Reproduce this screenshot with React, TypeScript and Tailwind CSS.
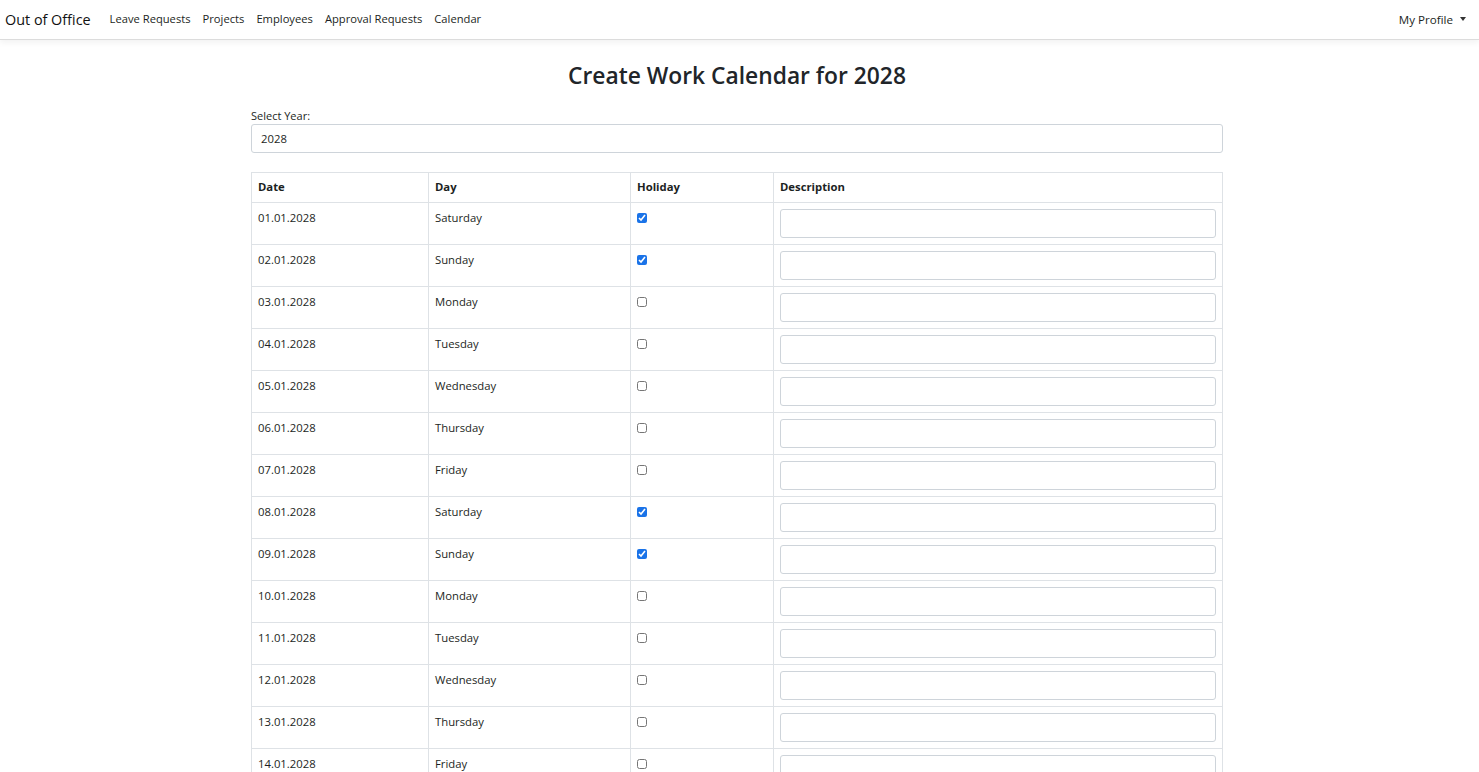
import React, { useState } from 'react';

const DAYS = ['Sunday', 'Monday', 'Tuesday', 'Wednesday', 'Thursday', 'Friday', 'Saturday'];

const pad = (n: number) => (n < 10 ? '0' + n : '' + n);

const buildRows = (year: number) => {
  const rows = [];
  for (let d = 1; d <= 31; d++) {
    const date = new Date(year, 0, d);
    const dow = date.getDay();
    rows.push({
      date: `${pad(d)}.01.${year}`,
      day: DAYS[dow],
      holiday: dow === 0 || dow === 6,
    });
  }
  return rows;
};

const NavBar: React.FC = () => (
  <nav className="h-[40px] bg-white border-b border-[#dcdcdc] shadow-[0_3px_6px_rgba(0,0,0,0.05)] flex items-center justify-between pl-[5px] pr-[13px]">
    <div className="flex items-center">
      <span className="text-[14.4px] text-[#111] mr-[19px]">Out of Office</span>
      <div className="flex items-center gap-[12px] text-[11.2px] text-[#1c1f23]">
        <a>Leave Requests</a>
        <a>Projects</a>
        <a>Employees</a>
        <a>Approval Requests</a>
        <a>Calendar</a>
      </div>
    </div>
    <div className="flex items-center text-[11.6px] text-[#1c1f23]">
      My Profile
      <span className="ml-[7px] w-0 h-0 border-l-[3.5px] border-r-[3.5px] border-t-[4px] border-l-transparent border-r-transparent border-t-[#333]" />
    </div>
  </nav>
);

export default function App() {
  const [year, setYear] = useState('2028');
  const [rows, setRows] = useState(() => buildRows(2028));

  const toggle = (i: number) => {
    setRows(rows.map((r, idx) => (idx === i ? { ...r, holiday: !r.holiday } : r)));
  };

  return (
    <div className="min-h-screen bg-white text-[#1c1f23] font-['Open_Sans',sans-serif]">
      <NavBar />
      <div className="pr-[5px]">
        <div className="w-[972px] mx-auto">
          <h3 className="text-center text-[22.8px] font-semibold leading-[1.2] mt-[22px] mb-[19px] text-[#212529]">
            Create Work Calendar for 2028
          </h3>
          <label className="block text-[11px] leading-[16px]">Select Year:</label>
          <input
            value={year}
            onChange={(e) => setYear(e.target.value)}
            className="w-full h-[29px] px-[9px] text-[11.3px] border border-[#ced4da] rounded-[3px] outline-none"
          />
          <table className="w-full mt-[19px] border-collapse text-[11.3px]">
            <thead>
              <tr className="h-[30px]">
                <th className="w-[177px] text-left font-bold px-[6px] border border-[#dee2e6]">Date</th>
                <th className="w-[202px] text-left font-bold px-[6px] border border-[#dee2e6]">Day</th>
                <th className="w-[143px] text-left font-bold px-[6px] border border-[#dee2e6]">Holiday</th>
                <th className="text-left font-bold px-[6px] border border-[#dee2e6]">Description</th>
              </tr>
            </thead>
            <tbody>
              {rows.map((r, i) => (
                <tr key={r.date}>
                  <td className="align-top px-[6px] pt-[6px] pb-[6px] leading-[18px] border border-[#dee2e6]">{r.date}</td>
                  <td className="align-top px-[6px] pt-[6px] pb-[6px] leading-[18px] border border-[#dee2e6]">{r.day}</td>
                  <td className="align-top px-[6px] pt-[6px] pb-[6px] border border-[#dee2e6]">
                    <input
                      type="checkbox"
                      checked={r.holiday}
                      onChange={() => toggle(i)}
                      className="w-[10px] h-[10px] mt-[4px] accent-[#1a73e8] block"
                    />
                  </td>
                  <td className="align-top px-[6px] pt-[6px] pb-[6px] border border-[#dee2e6]">
                    <input className="w-full h-[29px] block border border-[#ced4da] rounded-[3px] px-[9px] outline-none" />
                  </td>
                </tr>
              ))}
            </tbody>
          </table>
        </div>
      </div>
    </div>
  );
}
